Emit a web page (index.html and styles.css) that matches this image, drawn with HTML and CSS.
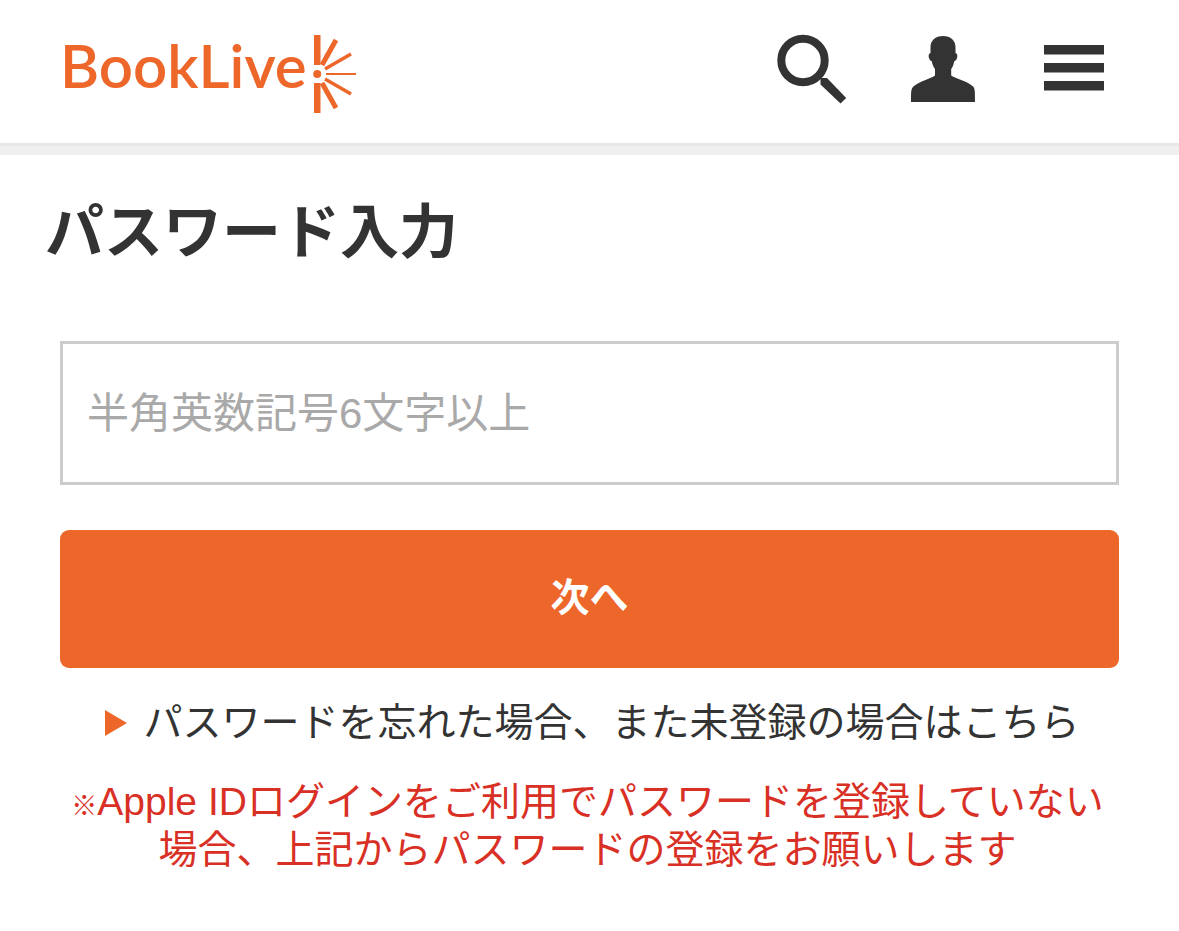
FILE: index.html
```html
<!DOCTYPE html>
<html lang="ja">
<head>
    <meta charset="UTF-8">
    <meta name="viewport" content="width=device-width, initial-scale=1.0">
    <title>パスワード入力</title>
    <link rel="stylesheet" href="styles.css">
</head>
<body>

    <header class="header">
        <a href="/" class="logo">
            <span class="logo-text">BookLive</span>
            <svg class="logo-mark" viewBox="0 0 46 80" aria-hidden="true">
                <rect x="2" y="1" width="6.500" height="30"/>
                <rect x="2" y="49" width="6.500" height="30"/>
                <circle cx="5.200" cy="40" r="4"/>
                <g class="rays">
                    <path d="M10 31 24 6" stroke-width="5"/>
                    <path d="M13 35 39 20" stroke-width="3.500"/>
                    <path d="M14 40H44" stroke-width="2"/>
                    <path d="M13 45 39 60" stroke-width="3.500"/>
                    <path d="M10 49 24 74" stroke-width="5"/>
                </g>
            </svg>
        </a>

        <nav class="header-nav">
            <button type="button" class="icon-btn" aria-label="検索">
                <svg viewBox="0 0 72 72">
                    <circle cx="27" cy="26.500" r="21.700" fill="none" stroke="currentColor" stroke-width="8"/>
                    <path d="M44.500 44h6.500l19.200 20-5.700 5.500L44.500 50.500z"/>
                </svg>
            </button>
            <button type="button" class="icon-btn" aria-label="マイページ">
                <svg viewBox="0 0 72 72">
                    <path d="M36 2c-7.500 0-12.500 4.500-12.500 11v6c-2 .5-2.200 3-1.500 5 .5 1.700 1.500 3 2.800 3.200.5 3 1.700 5.800 3.200 7.800v6.500c-4 3-16 6-21 10.500-3 2.500-3 5-3 16H68c0-11 0-13.500-2-15.500C61 47.500 48.500 44.500 44.200 41.500V35c1.500-2 2.500-4.800 3-7.800 1.300-.2 2.300-1.500 2.800-3.200.7-2 .5-4.500-1.500-5v-6C48.500 6.500 43.500 2 36 2z"/>
                </svg>
            </button>
            <button type="button" class="icon-btn" aria-label="メニュー">
                <svg viewBox="0 0 72 72">
                    <path d="M6 11h60v9.500H6zM6 29h60v9.500H6zM6 47h60v9.500H6z"/>
                </svg>
            </button>
        </nav>
    </header>

    <main>
        <h1 class="title">パスワード入力</h1>

        <div class="container">
            <!-- Password Form -->
            <form action="/login/password" method="POST">
                <input type="password" class="password" name="password" placeholder="半角英数記号6文字以上" aria-label="パスワード">
                <button type="submit" class="btn">次へ</button>
            </form>

            <p class="reminder">
                <a href="/reminder">パスワードを忘れた場合、また未登録の場合はこちら</a>
            </p>
            <p class="notice"><span class="mark">※</span>Apple IDログインをご利用でパスワードを登録していない場合、上記からパスワードの登録をお願いします</p>
        </div>
    </main>

</body>
</html>
```

FILE: styles.css
```css
* {
    box-sizing: border-box;
}
body {
    font-family: "Liberation Sans", "Noto Sans CJK JP", sans-serif;
    font-size: 39px;
    font-weight: 400;
    line-height: 48px;
    color: #333;
    background-color: #fff;
    margin: 0;
}
.header {
    display: flex;
    justify-content: space-between;
    align-items: flex-start;
    padding: 34px 69px 29px 60px;
    border-bottom: 3px solid #e8e8e8;
    box-shadow: 0 9px 0 #efefef;
    margin-bottom: 9px;
}
.logo {
    display: flex;
    gap: 5px;
    color: #ed672b;
    text-decoration: none;
}
.logo-text {
    font-family: Lato, sans-serif;
    font-size: 60px;
    font-weight: 600;
    line-height: 62px;
}
.logo-mark {
    width: 46px;
    height: 80px;
    fill: currentColor;
}
.rays {
    stroke: currentColor;
}
.header-nav {
    display: flex;
    gap: 59px;
}
.icon-btn {
    width: 72px;
    height: 72px;
    padding: 0;
    border: none;
    background: none;
    color: #333;
    cursor: pointer;
}
.icon-btn svg {
    display: block;
    width: 100%;
    fill: currentColor;
}
.title {
    margin: 0;
    padding: 40px 45px 70px;
    font-size: 59px;
    font-weight: 700;
    line-height: 76px;
}
.container {
    padding: 0 60px;
}
.password {
    display: block;
    width: 100%;
    height: 144px;
    padding: 2px 24px 0;
    border: 3px solid #ccc;
    border-radius: 0;
    background-color: #fff;
    font: inherit;
    font-size: 42px;
    color: #333;
}
.password::placeholder {
    color: #a9a9a9;
}
.btn {
    display: block;
    width: 100%;
    height: 138px;
    margin-top: 45px;
    padding: 0 0 2px;
    border: none;
    border-radius: 9px;
    background-color: #ed672b;
    color: #fff;
    font: inherit;
    font-weight: 700;
    cursor: pointer;
}
.reminder, .notice {
    margin: 31px 0 0;
    text-align: center;
}
.reminder {
    padding-left: 6px;
}
.reminder a {
    display: inline-flex;
    align-items: center;
    gap: 16px;
    color: #333;
    text-decoration: none;
}
/* orange arrow in front of the link */
.reminder a::before {
    content: "";
    border-left: 22px solid #ed672b;
    border-top: 13px solid transparent;
    border-bottom: 13px solid transparent;
}
.notice {
    padding-right: 4px;
    color: #d93025;
}
.mark {
    font-size: 26px;
    font-weight: 700;
    line-height: 1;
}
```
